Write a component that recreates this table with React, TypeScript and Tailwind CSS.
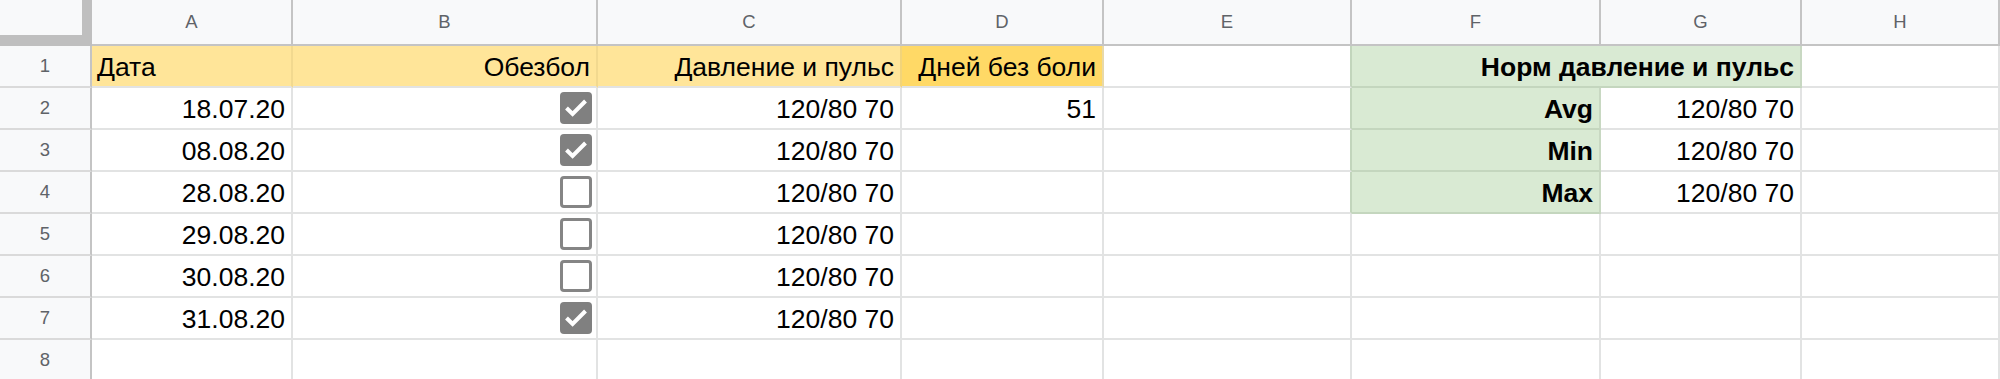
import React from "react";

const COLS = [201, 305, 304, 202, 248, 249, 201];
const LETTERS = ["A", "B", "C", "D", "E", "F", "G", "H"];

const YELLOW = "bg-[#ffe599]";
const YELLOW_DARK = "bg-[#ffd966]";
const GREEN = "bg-[#d9ead3]";

type CellProps = {
	w?: number;
	grow?: boolean;
	bg?: string;
	br?: string;
	bb?: string;
	align?: "left" | "right";
	bold?: boolean;
	children?: React.ReactNode;
};

function Cell({ w, grow, bg = "bg-white", br = "border-r-[#e2e3e3]", bb = "border-b-[#e2e3e3]", align = "right", bold, children }: CellProps) {
	return (
		<div
			style={grow ? undefined : { width: w }}
			className={[
				"h-[42px] shrink-0 border-r-2 border-b-2 flex items-end overflow-hidden whitespace-nowrap",
				grow ? "flex-1" : "",
				bg,
				br,
				bb,
				align === "right" ? "justify-end pr-[6px]" : "justify-start pl-[5px]",
			].join(" ")}>
			<span className={"pb-[4px] leading-[30px] text-[26.5px] text-black " + (bold ? "font-bold" : "")}>{children}</span>
		</div>
	);
}

function Checkbox({ checked }: { checked: boolean }) {
	return (
		<div className="h-[42px] w-full flex items-center justify-end pr-[1px]">
			{checked ? (
				<div className="w-[32px] h-[32px] rounded-[4px] bg-[#808080] flex items-center justify-center">
					<svg width="32" height="32" viewBox="0 0 32 32">
						<path d="M6.5 16 L12.6 22 L25.5 9" fill="none" stroke="white" strokeWidth="4" />
					</svg>
				</div>
			) : (
				<div className="w-[32px] h-[32px] rounded-[4px] border-[3.5px] border-[#858585] bg-white" />
			)}
		</div>
	);
}

function BoxCell({ checked }: { checked: boolean }) {
	return (
		<div style={{ width: COLS[1] }} className="h-[42px] shrink-0 border-r-2 border-b-2 border-r-[#e2e3e3] border-b-[#e2e3e3] pr-[3px] flex items-start">
			<div className="-mt-[1px] w-full">
				<Checkbox checked={checked} />
			</div>
		</div>
	);
}

function RowHead({ n }: { n: number }) {
	return (
		<div className="w-[92px] h-[42px] shrink-0 bg-[#f8f9fa] border-r-2 border-r-[#c4c4c4] border-b-2 border-b-[#dadada] flex items-center justify-center text-[18.5px] text-[#5f6368]">
			{n}
		</div>
	);
}

const data = [
	{ date: "18.07.20", checked: true, days: "51", label: "Avg" },
	{ date: "08.08.20", checked: true, days: "", label: "Min" },
	{ date: "28.08.20", checked: false, days: "", label: "Max" },
	{ date: "29.08.20", checked: false, days: "", label: "" },
	{ date: "30.08.20", checked: false, days: "", label: "" },
	{ date: "31.08.20", checked: true, days: "", label: "" },
];

export default function App() {
	return (
		<div className="w-[2000px] h-[379px] overflow-hidden bg-white" style={{ fontFamily: '"Liberation Sans", Arial, sans-serif' }}>
			{/* Column headers */}
			<div className="flex">
				<div className="w-[92px] h-[46px] shrink-0 bg-[#bfbfbf]">
					<div className="w-[82px] h-[35px] bg-[#f8f9fa]" />
				</div>
				{LETTERS.map((l, i) => (
					<div
						key={l}
						style={i < COLS.length ? { width: COLS[i] } : undefined}
						className={
							"h-[46px] shrink-0 bg-[#f8f9fa] border-r-2 border-b-2 border-[#c4c4c4] flex items-center justify-center text-[18.5px] text-[#5f6368] " +
							(i >= COLS.length ? "flex-1" : "")
						}>
						{l}
					</div>
				))}
			</div>

			{/* Row 1 */}
			<div className="flex">
				<RowHead n={1} />
				<Cell w={COLS[0]} bg={YELLOW} br="border-r-[#f2d98f]" align="left">
					Дата
				</Cell>
				<Cell w={COLS[1]} bg={YELLOW} br="border-r-[#f2d98f]">
					Обезбол
				</Cell>
				<Cell w={COLS[2]} bg={YELLOW} br="border-r-[#f2d47a]">
					Давление и пульс
				</Cell>
				<Cell w={COLS[3]} bg={YELLOW_DARK} br="border-r-[#e8d9a8]">
					Дней без боли
				</Cell>
				<Cell w={COLS[4]} br="border-r-[#c2d5bc]" />
				<Cell w={COLS[5] + COLS[6]} bg={GREEN} br="border-r-[#c8d8c2]" bb="border-b-[#c4d6be]" bold>
					Норм давление и пульс
				</Cell>
				<Cell grow />
			</div>

			{/* Data rows */}
			{data.map((r, i) => (
				<div key={i} className="flex">
					<RowHead n={i + 2} />
					<Cell w={COLS[0]}>{r.date}</Cell>
					<BoxCell checked={r.checked} />
					<Cell w={COLS[2]}>120/80 70</Cell>
					<Cell w={COLS[3]}>{r.days}</Cell>
					<Cell w={COLS[4]} br={r.label ? "border-r-[#c2d5bc]" : "border-r-[#e2e3e3]"} />
					{r.label ? (
						<Cell w={COLS[5]} bg={GREEN} br="border-r-[#c8d8c2]" bb="border-b-[#c4d6be]" bold>
							{r.label}
						</Cell>
					) : (
						<Cell w={COLS[5]} />
					)}
					<Cell w={COLS[6]}>{r.label ? "120/80 70" : ""}</Cell>
					<Cell grow />
				</div>
			))}

			{/* Row 8 */}
			<div className="flex">
				<RowHead n={8} />
				{COLS.map((w, i) => (
					<Cell key={i} w={w} />
				))}
				<Cell grow />
			</div>
		</div>
	);
}
